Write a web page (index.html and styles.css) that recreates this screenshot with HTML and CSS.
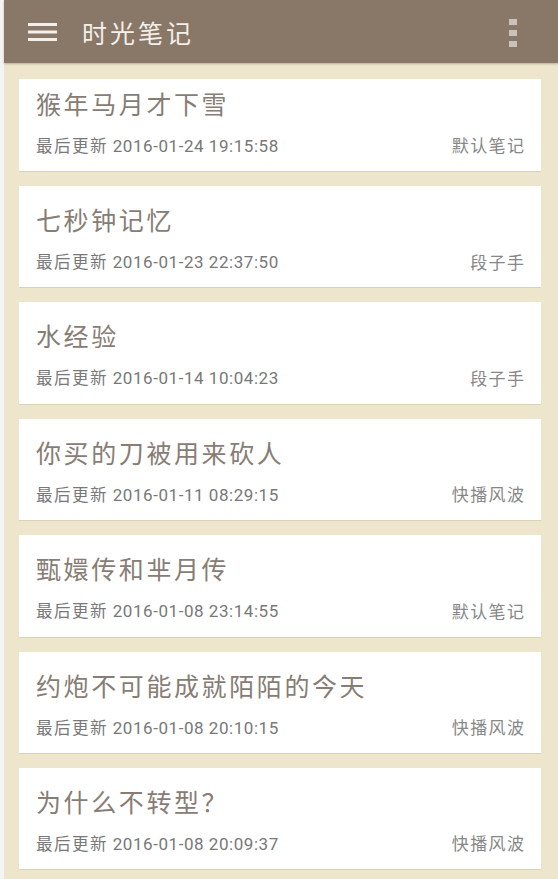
FILE: index.html
```html
<!DOCTYPE html>
<html lang="zh">
<head>
<meta charset="utf-8">
<title>时光笔记</title>
<link rel="stylesheet" href="styles.css">
</head>
<body>
<div class="app">
  <header class="toolbar">
    <div class="menu-icon">
      <svg width="29" height="18" viewBox="0 0 29 18"><rect x="0" y="0" width="29" height="3" fill="#f3efea"/><rect x="0" y="7.5" width="29" height="3" fill="#f3efea"/><rect x="0" y="15" width="29" height="3" fill="#f3efea"/></svg>
    </div>
    <h1 class="toolbar-title">时光笔记</h1>
    <div class="overflow-icon">
      <span class="dot"></span><span class="dot"></span><span class="dot"></span>
    </div>
  </header>
  <main class="note-list">
    <article class="note-card note-card--first">
      <h2 class="note-title">猴年马月才下雪</h2>
      <div class="note-meta"><span class="meta-time"><span class="meta-label">最后更新</span> 2016-01-24 19:15:58</span><span class="note-tag">默认笔记</span></div>
    </article>
    <article class="note-card">
      <h2 class="note-title">七秒钟记忆</h2>
      <div class="note-meta"><span class="meta-time"><span class="meta-label">最后更新</span> 2016-01-23 22:37:50</span><span class="note-tag">段子手</span></div>
    </article>
    <article class="note-card">
      <h2 class="note-title">水经验</h2>
      <div class="note-meta"><span class="meta-time"><span class="meta-label">最后更新</span> 2016-01-14 10:04:23</span><span class="note-tag">段子手</span></div>
    </article>
    <article class="note-card">
      <h2 class="note-title">你买的刀被用来砍人</h2>
      <div class="note-meta"><span class="meta-time"><span class="meta-label">最后更新</span> 2016-01-11 08:29:15</span><span class="note-tag">快播风波</span></div>
    </article>
    <article class="note-card">
      <h2 class="note-title">甄嬛传和芈月传</h2>
      <div class="note-meta"><span class="meta-time"><span class="meta-label">最后更新</span> 2016-01-08 23:14:55</span><span class="note-tag">默认笔记</span></div>
    </article>
    <article class="note-card">
      <h2 class="note-title">约炮不可能成就陌陌的今天</h2>
      <div class="note-meta"><span class="meta-time"><span class="meta-label">最后更新</span> 2016-01-08 20:10:15</span><span class="note-tag">快播风波</span></div>
    </article>
    <article class="note-card">
      <h2 class="note-title">为什么不转型？</h2>
      <div class="note-meta"><span class="meta-time"><span class="meta-label">最后更新</span> 2016-01-08 20:09:37</span><span class="note-tag">快播风波</span></div>
    </article>
  </main>
</div>
</body>
</html>
```

FILE: styles.css
```css
* { box-sizing: border-box; }
html, body { margin: 0; padding: 0; }
body {
  background: #ede6cc;
  font-family: Roboto, "Noto Sans CJK SC", sans-serif;
  overflow: hidden;
}
.app {
  border-left: 4px solid #f4f4f4;
  min-height: 879px;
  background: #ede6cc;
}
.toolbar {
  height: 63px;
  background: #897767;
  display: flex;
  align-items: center;
  padding: 0 41px 0 24px;
  box-shadow: 0 1px 2px rgba(90, 70, 50, 0.35);
  position: relative;
}
.menu-icon { width: 29px; height: 18px; display: flex; margin-top: 1px; }
.toolbar-title {
  margin: 0 0 0 25px;
  font-family: "Noto Sans CJK SC", sans-serif;
  font-weight: 400;
  font-size: 25px;
  letter-spacing: 3px;
  color: #f3efea;
  line-height: 30px;
  flex: 1;
}
.overflow-icon {
  display: flex;
  flex-direction: column;
  gap: 5px;
  margin-top: 2px;
}
.dot {
  width: 8px;
  height: 6px;
  background: #cbc2ba;
}
.note-list {
  padding: 16px 17px 0 15px;
  display: flex;
  flex-direction: column;
  gap: 15px;
}
.note-card {
  background: #ffffff;
  height: 101.4px;
  padding: 17px 17px 0 17px;
  box-shadow: 0 1px 0 rgba(200, 190, 160, 0.5);
}
.note-card--first {
  height: 92px;
  padding-top: 7.6px;
}
.note-title {
  margin: 0;
  font-family: "Noto Sans CJK SC", sans-serif;
  font-weight: 400;
  font-size: 25px;
  letter-spacing: 2.6px;
  line-height: 32px;
  color: #877d74;
  white-space: nowrap;
}
.note-meta {
  margin-top: 15px;
  display: flex;
  justify-content: space-between;
  align-items: center;
  line-height: 22px;
  font-size: 17px;
  color: #787878;
}
.meta-time { letter-spacing: 0.55px; }
.meta-label {
  font-family: "Noto Sans CJK SC", sans-serif;
  font-size: 16.5px;
  letter-spacing: 1.5px;
}
.note-tag {
  font-family: "Noto Sans CJK SC", sans-serif;
  font-size: 17px;
  letter-spacing: 1.4px;
  margin-right: -1.4px;
  color: #878787;
}
```
